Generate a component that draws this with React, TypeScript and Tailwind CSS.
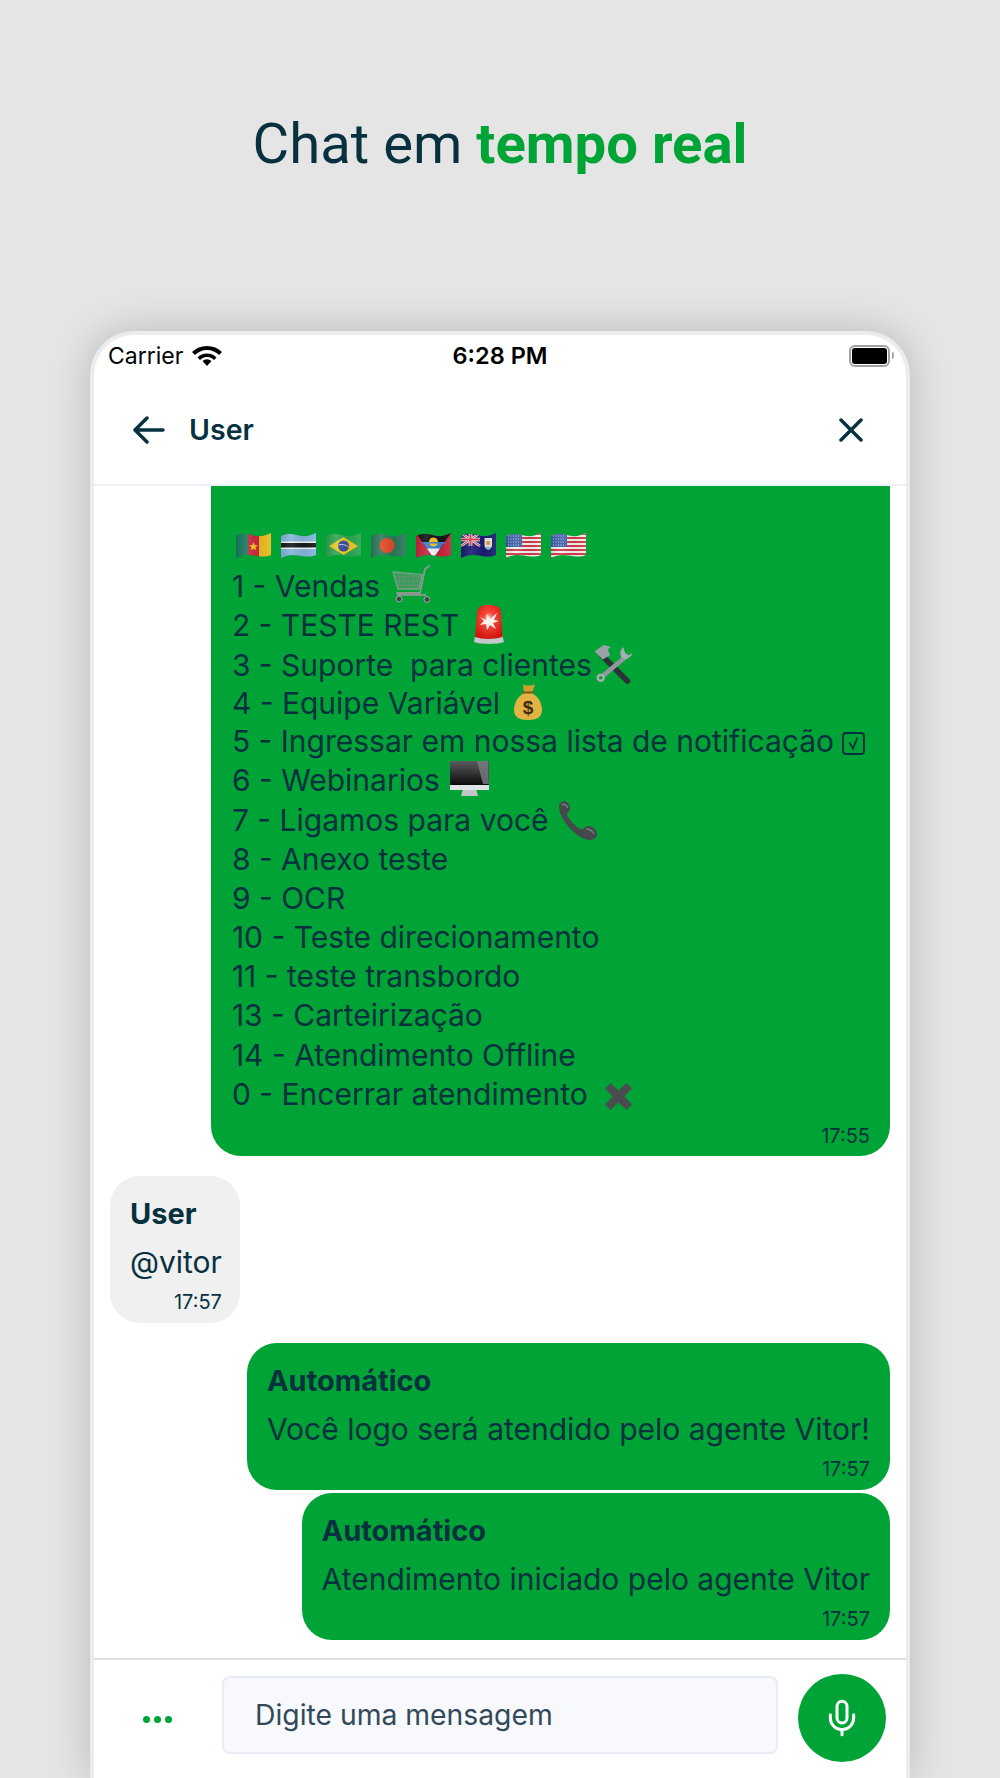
import React, { useId } from 'react';
import { Mic } from 'lucide-react';

const Flag = ({ children }: { children: React.ReactNode }) => {
  const id = useId();
  return (
    <svg width="35" height="25" viewBox="0 0 35 25" className="shrink-0">
      <defs>
        <clipPath id={id}>
          <path d="M0 3C7 0 12 1 18 2.500S29 3 35 0V22C29 24.500 24 23.500 18 22.500S6 21.500 0 25Z" />
        </clipPath>
        <linearGradient id={id + 'w'} x1="0" y1="0" x2="1" y2="0">
          <stop offset="0" stopColor="#000" stopOpacity=".1" />
          <stop offset=".3" stopColor="#fff" stopOpacity=".1" />
          <stop offset=".65" stopColor="#000" stopOpacity=".05" />
          <stop offset="1" stopColor="#fff" stopOpacity=".08" />
        </linearGradient>
      </defs>
      <g clipPath={`url(#${id})`}>
        {children}
        <rect width="35" height="25" fill={`url(#${id}w)`} />
      </g>
    </svg>
  );
};

const Stripes = () => (
  <>
    <rect width="35" height="25" fill="#f4f0ee" />
    {[0, 4, 8, 12, 16, 20, 24].map((y) => (
      <rect key={y} y={y} width="35" height="2" fill="#cf3a48" />
    ))}
    <rect width="16" height="14" fill="#3e5ea8" />
    {[2, 5, 8, 11].map((y) => (
      <path key={y} d={`M2 ${y + 1}H15`} stroke="#c9d4ee" strokeWidth="1" strokeDasharray="1 1.500" />
    ))}
  </>
);

const Flags = () => (
  <div className="flex h-[41px] items-center gap-[10px] pt-[2px] pl-1">
    <Flag>
      <rect width="12" height="25" fill="#17795f" />
      <rect x="12" width="11" height="25" fill="#c9283c" />
      <rect x="23" width="12" height="25" fill="#e9bb1f" />
      <path d="M17.500 9l1.200 3.200 3.300.1-2.600 2 1 3.200-2.900-1.900-2.900 1.900 1-3.200-2.600-2 3.300-.1z" fill="#f6c91e" />
    </Flag>
    <Flag>
      <rect width="35" height="25" fill="#84b5dc" />
      <rect y="8.500" width="35" height="7.500" fill="#f2f2f2" />
      <rect y="10" width="35" height="4.500" fill="#16181a" />
    </Flag>
    <Flag>
      <rect width="35" height="25" fill="#2ea552" />
      <path d="M17.500 4L32 13 17.500 22 3 13Z" fill="#e8c91f" />
      <circle cx="17.500" cy="13" r="5.500" fill="#3b4a9c" />
      <path d="M12.500 12c3-1 7-.5 10 1.800" stroke="#eee" strokeWidth=".8" fill="none" />
    </Flag>
    <Flag>
      <rect width="35" height="25" fill="#2b7a5b" />
      <circle cx="16" cy="12.500" r="7.500" fill="#e2492a" />
    </Flag>
    <Flag>
      <rect width="35" height="25" fill="#c7233a" />
      <path d="M0 0H35L17.500 25Z" fill="#111" />
      <path d="M6.500 9H28.500L17.500 25Z" fill="#3a7fd0" />
      <path d="M11 15.500H24L17.500 25Z" fill="#f4f4f4" />
      <circle cx="17.500" cy="9" r="4.500" fill="#f5c422" />
      <path d="M5.800 9H29.200V10.600H5.800Z" fill="#3a7fd0" />
    </Flag>
    <Flag>
      <rect width="35" height="25" fill="#1a1c72" />
      <rect width="19" height="13" fill="#27307f" />
      <path d="M0 0L19 13M19 0L0 13" stroke="#f0e6e6" strokeWidth="2.500" />
      <path d="M0 0L19 13M19 0L0 13" stroke="#d4324a" strokeWidth="1" />
      <path d="M9.500 0V13M0 6.500H19" stroke="#f0e6e6" strokeWidth="3.500" />
      <path d="M9.500 0V13M0 6.500H19" stroke="#d4324a" strokeWidth="2" />
      <path d="M23.500 5H31V12C31 15 29 16 27.250 17 25.500 16 23.500 15 23.500 12Z" fill="#e6e2d8" />
      <circle cx="27.250" cy="10" r="2" fill="#d69a3c" />
      <path d="M24 14H30.500L27.250 17Z" fill="#7fb4d8" />
    </Flag>
    <Flag>
      <Stripes />
    </Flag>
    <Flag>
      <Stripes />
    </Flag>
  </div>
);

const Cart = () => (
  <svg width="38" height="38" viewBox="0 0 38 38" className="ml-[12px] inline-block align-[-6px]">
    <path d="M1 7L30 9.500 27 24H6Z" fill="#5f9a72" opacity=".55" />
    <g stroke="#6d8f78" strokeWidth=".8" fill="none">
      <path d="M6 7.500L8.500 24M11 8L13 24M16 8.500L17.500 24M21 9L22 24M26 9.500L25.500 24" />
      <path d="M2 12H29.500M3 16H29M4 20H28" />
    </g>
    <path d="M1 7L30 9.500 27 24H6Z" stroke="#7e9f88" strokeWidth="1.300" fill="none" />
    <path d="M37 1L33 4 28 28H5" stroke="#8a9a8e" strokeWidth="1.800" fill="none" strokeLinecap="round" />
    <circle cx="7" cy="34" r="3" fill="#3f4a44" stroke="#a3aca6" />
    <circle cx="35" cy="34.500" r="3" fill="#3f4a44" stroke="#a3aca6" />
    <path d="M5 30H34" stroke="#8a9a8e" strokeWidth="1.800" />
  </svg>
);

const Siren = () => (
  <svg width="30" height="39" viewBox="0 0 30 39" className="ml-[15px] inline-block align-[-8px]">
    <defs>
      <radialGradient id="sirenGlow" cx=".5" cy=".4" r=".62">
        <stop offset="0" stopColor="#ffd9d2" />
        <stop offset=".3" stopColor="#f8483c" />
        <stop offset="1" stopColor="#cf140e" />
      </radialGradient>
      <filter id="sirenBlur">
        <feGaussianBlur stdDeviation=".7" />
      </filter>
    </defs>
    <path d="M1 31L28.500 31 30 37C24 39.500 6 39.500 0 37Z" fill="#c5c8c9" />
    <path d="M3 8C3 2 7 0 15 0 23 0 27 2 27 8L28.500 32C20 34.500 9 34.500 1 32Z" fill="url(#sirenGlow)" />
    <path d="M6 12l6 3 1-6 3 5 7-6-3 7 5 1-6 2 3 6-6-4-3 5-1-6-6 1 4-4z" fill="#fff2ee" filter="url(#sirenBlur)" />
  </svg>
);

const Tools = () => (
  <svg width="41" height="40" viewBox="0 0 39 39" className="ml-[1px] inline-block align-[-8px]">
    <path d="M8 11L33 36" stroke="#2c3135" strokeWidth="5.500" strokeLinecap="round" />
    <path d="M1 7L10 1 17 3 14 5 16 11 9 15Z" fill="#9aa2a8" />
    <path d="M32 12L7 33" stroke="#8f989e" strokeWidth="4.500" strokeLinecap="round" />
    <path d="M29 3A7.500 7.500 0 0 0 28 14 7.500 7.500 0 0 0 38 9L34 11 31 9Z" fill="#a5adb2" />
    <circle cx="7" cy="33" r="4" fill="#a5adb2" />
    <circle cx="7" cy="33" r="1.700" fill="#00a335" />
  </svg>
);

const MoneyBag = () => (
  <svg width="28" height="37" viewBox="0 0 28 37" className="ml-[14px] inline-block align-[-6px]">
    <path d="M9 1C11 3 17 3 21 1L18.500 9H10Z" fill="#d19f2e" />
    <path d="M10 10C3 14 0 21 0 27 0 34 5 37 14 37S28 34 28 27C28 21 25 14 18 10Z" fill="#e3b244" />
    <path d="M9 9.500H19" stroke="#7a5718" strokeWidth="2" strokeLinecap="round" />
    <text x="14" y="31" fontSize="19" fontWeight="700" textAnchor="middle" fill="#3b2c12" fontFamily="Liberation Sans, sans-serif">
      $
    </text>
  </svg>
);

const CheckBox = () => (
  <svg width="23" height="23" viewBox="0 0 23 23" className="ml-[8px] inline-block align-[-3px]" fill="none" stroke="#07313f">
    <rect x="1" y="1" width="21" height="21" rx="3" strokeWidth="2" />
    <path d="M7.500 10.500L11 16.500 15.500 5.500" strokeWidth="1.800" />
  </svg>
);

const Monitor = () => (
  <svg width="39" height="36" viewBox="0 0 39 36" className="ml-[10px] inline-block align-[-6px]">
    <defs>
      <linearGradient id="screenShade" x1="0" y1="0" x2="0" y2="1">
        <stop offset="0" stopColor="#5a5d60" />
        <stop offset="1" stopColor="#0a0a0b" />
      </linearGradient>
    </defs>
    <path d="M13 28H26L28 35H11Z" fill="#c2c6c8" />
    <rect width="39" height="24" rx="1" fill="url(#screenShade)" />
    <path d="M27 0H38L39 23 33 23Z" fill="#7b7d7f" opacity=".8" />
    <rect y="24" width="39" height="5" fill="#dfe2e3" />
  </svg>
);

const Phone = () => (
  <svg width="40" height="39" viewBox="0 0 40 39" className="ml-[9px] inline-block align-[-9px]">
    <path d="M1 5C1 2 4 0 7 0 10 1 12 4 12 8 12 11 9 11 9 13 10 18 19 27 23 28 26 29 26 25 30 25 35 25 39 29 39 33 39 37 35 39 31 39 20 38 1 20 1 5Z" fill="#45494c" />
    <path d="M4 4C6 2 9 4 9.500 7M28 28C32 28 35 31 36 33" stroke="#777b7e" strokeWidth="1.500" fill="none" />
  </svg>
);

const Cross = () => (
  <svg width="27" height="27" viewBox="0 0 27 27" className="ml-[17px] inline-block align-[-5px]">
    <path d="M5.500 0L13.500 7.500 21.500 0 27 5.500 19.500 13.500 27 21.500 21.500 27 13.500 19.500 5.500 27 0 21.500 7.500 13.500 0 5.500Z" fill="#4a4d50" />
  </svg>
);

const menu: [string, React.ReactNode][] = [
  ['1 - Vendas', <Cart />],
  ['2 - TESTE REST', <Siren />],
  ['3 - Suporte\u00a0 para clientes', <Tools />],
  ['4 - Equipe Variável', <MoneyBag />],
  ['5 - Ingressar em nossa lista de notificação', <CheckBox />],
  ['6 - Webinarios', <Monitor />],
  ['7 - Ligamos para você', <Phone />],
  ['8 - Anexo teste', null],
  ['9 - OCR', null],
  ['10 - Teste direcionamento', null],
  ['11 - teste transbordo', null],
  ['13 - Carteirização', null],
  ['14 - Atendimento Offline', null],
  ['0 - Encerrar atendimento', <Cross />],
];

const Bubble = ({ name, text, time }: { name: string; text: string; time: string }) => (
  <div className="self-end rounded-[30px] bg-[#00a335] px-5 pt-5 pb-[10px] text-[#07313f]">
    <p className="text-[29px] leading-[36px] font-bold">{name}</p>
    <p className="mt-[12px] text-[30px] leading-[36px] whitespace-nowrap">{text}</p>
    <p className="mt-[11px] text-right text-[20px] leading-[22px]">{time}</p>
  </div>
);

export default function App() {
  return (
    <div className="flex h-[1778px] flex-col overflow-hidden bg-[#e5e5e5] font-['Inter',sans-serif] text-[#07313f]">
      <h1 className="mt-[109px] text-center font-['Roboto',sans-serif] text-[56.300px] leading-[70px] font-normal text-[#07313f]">
        Chat em <span className="font-bold text-[#00a335]">tempo real</span>
      </h1>

      {/* Phone frame */}
      <div className="mx-[90px] mt-[152px] flex min-h-0 flex-1 flex-col rounded-t-[44px] border-x-4 border-t-4 border-[#ececec] bg-white shadow-[0_0_40px_rgba(0,0,0,0.2)]">
        <div className="flex h-[41px] shrink-0 items-center justify-between overflow-hidden rounded-t-[40px] pr-[12px] pl-[14px] text-black">
          <div className="flex items-center gap-[9px]">
            <span className="text-[23px] leading-[30px]">Carrier</span>
            <svg width="30" height="22" viewBox="0 0 30 22">
              <path d="M15 21L10.500 16A6.500 6.500 0 0 1 19.500 16Z" />
              <path d="M15 8.500C19 8.500 22 10 24.500 12.500L22 15C20 13 18 12 15 12S10 13 8 15L5.500 12.500C8 10 11 8.500 15 8.500Z" />
              <path d="M15 1C21 1 26 3 30 7L27 10C24 7 20 5 15 5S6 7 3 10L0 7C4 3 9 1 15 1Z" />
            </svg>
          </div>
          <span className="absolute left-0 w-full text-center text-[23.500px] leading-[30px] font-semibold">6:28 PM</span>
          <div className="flex items-center">
            <div className="flex h-[22px] w-[41px] items-center rounded-[6px] border-2 border-[#a0a0a0] p-[1px]">
              <div className="h-full w-full rounded-[3px] bg-black" />
            </div>
            <div className="ml-[2px] h-[7px] w-[2px] rounded-r bg-[#aaa]" />
          </div>
        </div>

        <header className="flex h-[110px] shrink-0 items-center justify-between border-b-2 border-[#eef1f8] pr-[43px] pl-[39px]">
          <div className="flex items-center gap-[24px]">
            <svg width="32" height="28" viewBox="0 0 32 28" fill="none" stroke="#07313f" strokeWidth="3.500" strokeLinecap="round" strokeLinejoin="round">
              <path d="M30 14H2M14 2L2 14 14 26" />
            </svg>
            <span className="text-[28.500px] font-semibold">User</span>
          </div>
          <svg width="24" height="24" viewBox="0 0 24 24" fill="none" stroke="#07313f" strokeWidth="3.500" strokeLinecap="round">
            <path d="M2 2L22 22M22 2L2 22" />
          </svg>
        </header>

        <div className="flex min-h-0 flex-1 flex-col justify-end gap-5 overflow-hidden px-[16px] pb-[18px]">
          <div className="shrink-0 self-end rounded-[30px] bg-[#00a335] pt-[90px] pr-[25px] pb-[9px] pl-[21px] text-[30px] leading-[39.200px] text-[#07313f]">
            <Flags />
            {menu.map(([label, icon]) => (
              <div key={label} className="h-[39.200px] whitespace-nowrap">
                {label}
                {icon}
              </div>
            ))}
            <p className="mt-[11px] -mr-[5px] text-right text-[20px] leading-[22px]">17:55</p>
          </div>

          <div className="shrink-0 self-start rounded-[30px] bg-[#f0f0f0] pt-5 pr-[18px] pb-[10px] pl-5">
            <p className="text-[29px] leading-[36px] font-bold">User</p>
            <p className="mt-[12px] text-[30px] leading-[36px]">@vitor</p>
            <p className="mt-[11px] text-right text-[20px] leading-[22px]">17:57</p>
          </div>

          <div className="flex shrink-0 flex-col gap-[3px]">
            <Bubble name="Automático" text="Você logo será atendido pelo agente Vitor!" time="17:57" />
            <Bubble name="Automático" text="Atendimento iniciado pelo agente Vitor" time="17:57" />
          </div>
        </div>

        <footer className="flex h-[120px] shrink-0 items-center border-t-2 border-[#e0e0e0] pr-5">
          <div className="flex w-[128px] justify-center gap-[4px] pr-[2px]">
            <span className="size-[7px] rounded-full bg-[#00a335]" />
            <span className="size-[7px] rounded-full bg-[#00a335]" />
            <span className="size-[7px] rounded-full bg-[#00a335]" />
          </div>
          <div className="mb-[8px] flex h-[78px] w-[556px] items-center rounded-[8px] border-2 border-[#e8ecf5] bg-[#f7f9fd] pl-[31px] text-[28.300px] text-[#33495a]">
            Digite uma mensagem
          </div>
          <div className="mb-[2px] ml-5 flex size-[88px] items-center justify-center rounded-full bg-[#00a335]">
            <Mic size={40} color="#fff" strokeWidth={1.800} />
          </div>
        </footer>
      </div>
    </div>
  );
}
